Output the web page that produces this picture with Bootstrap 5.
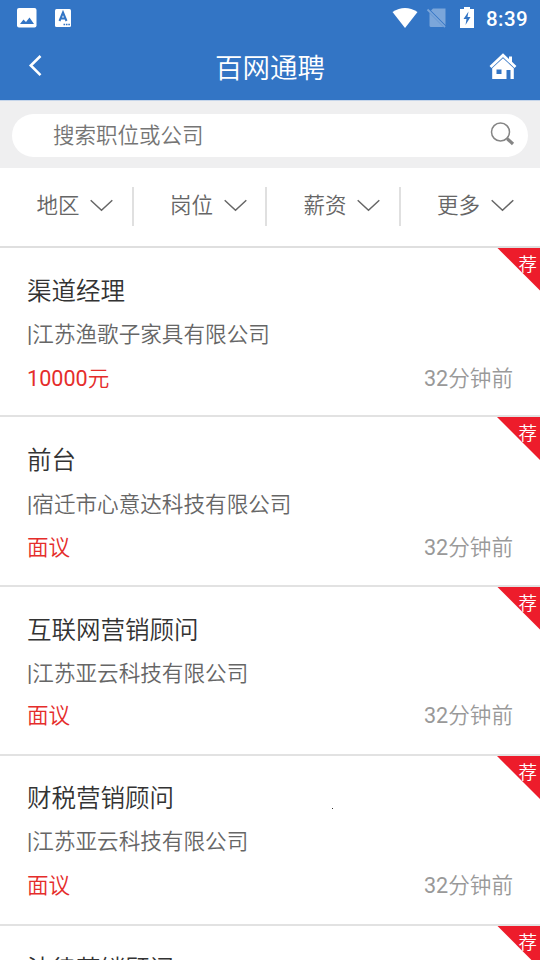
<!DOCTYPE html>
<html lang="zh-CN">
<head>
<meta charset="utf-8">
<meta name="viewport" content="width=device-width, initial-scale=1">
<title>百网通聘</title>
<link href="https://cdn.jsdelivr.net/npm/bootstrap@5.3.0/dist/css/bootstrap.min.css" rel="stylesheet">
<style>
body{font-family:Roboto,"Noto Sans CJK SC",sans-serif;font-weight:350;height:960px;background:#fff;color:#333}
.topbar{background:#3375c5;height:100px}
.status{height:36px;padding:0 12px 0 17px}
.clock{font-size:20.5px;font-weight:500;line-height:36px;letter-spacing:.4px;padding-top:2px}
.titlebar{height:64px;padding:0 23px 0 28px}
.titlebar h1{font-size:27.5px;font-weight:350;line-height:60px;padding:1px 0 0 7px}
.search-area{height:68px;background:#efeff0;border-top:1px solid #c5d5ea;padding:13px 12px 0}
.search-pill{height:43px;background:#fff;padding:0 12px 0 41px;font-size:21.5px;color:#757575}
.search-pill span{padding-top:2px}
.filters{height:79.6px;border-bottom:2px solid #dfdfdf;font-size:21.5px;color:#666}
.filter{height:39px;margin-top:19px;width:133.5px;padding:0 18.5px 0 36.5px;border-right:2px solid #e0e0e0}
.filter svg{margin-bottom:2px}
.filter:last-child{border-right-color:transparent}
.job{height:169.5px;padding:27px 27px 0;border-bottom:2px solid #e2e2e2}
.job h2{font-size:24.5px;line-height:34px;margin:0;font-weight:350;color:#333}
.company{font-size:21.6px;line-height:32px;color:#666;margin-top:10.6px}
.meta{font-size:21.6px;line-height:32px;margin-top:11.4px}
.num{font-weight:400}
.job:nth-child(3) .meta{margin-top:10px}
.job:nth-child(4) h2{margin-top:-.8px}
.job:nth-child(4) .company{margin-top:10px}
.pay{color:#e52d2b}
.ago{color:#999}
.ribbon{width:43px;height:43px;background:#ed1c2b;clip-path:polygon(0 0,100% 0,100% 100%);color:#fff;font-size:18.5px;line-height:34px;padding-right:3px}
.speck{left:332px;top:808px;width:1px;height:1px;background:#333}
</style>
</head>
<body class="overflow-hidden position-relative">
<header class="topbar text-white">
  <div class="status d-flex align-items-center">
    <svg width="20" height="20" viewBox="0 0 20 20"><rect width="19.5" height="19.5" rx="2" fill="#fff"/><path d="M3 16l3.5-4.5 2.5 2.5 3.5-4.500 4.500 6.500z" fill="#3375c5"/></svg>
    <svg class="ms-3" width="20" height="20" viewBox="-2 0 20 20"><rect y="1" width="16" height="18" rx="1.500" fill="#fff"/><path d="M4.500 13L8 4.500 11.500 13M5.700 10.500h4.600" fill="none" stroke="#3375c5" stroke-width="2"/><path d="M8.500 16.500h6.500" stroke="#3375c5" stroke-width="1.500" stroke-dasharray="1.600 .8"/></svg>
    <svg class="ms-auto" width="26" height="21" viewBox="0 0 26 21"><path d="M0.500 4Q13-4 25.500 4L13 20z" fill="#fff"/></svg>
    <svg class="ms-2" width="22" height="21" viewBox="0 0 22 21"><path d="M7 .500h12.500v16.500L5 2.500zM3.500 5l14 14H5Q3.500 19 3.500 17.500z" fill="#7ba6da"/><path d="M1.500 1.500l17.500 17.500" stroke="#7ba6da" stroke-width="1.800"/></svg>
    <svg class="ms-2 me-1" width="18" height="22" viewBox="-4 0 18 22"><path d="M4 0h6v2h4V21H0V2h4z" fill="#fff"/><path d="M8.500 4.500L3.500 12H6.500L5.500 18 10.500 10H7.500z" fill="#3375c5"/></svg>
    <span class="clock ms-2">8:39</span>
  </div>
  <div class="titlebar d-flex align-items-center justify-content-between">
    <svg width="16" height="22" viewBox="0 0 16 22" class="mb-1"><path d="M12.500 1L2.800 10.500l9.700 9.700" fill="none" stroke="#fff" stroke-width="2.600"/></svg>
    <h1 class="m-0">百网通聘</h1>
    <svg class="mb-1" width="28" height="28" viewBox="0 0 28 28"><path d="M1.500 15L14 3.200 26.500 15" fill="none" stroke="#fff" stroke-width="2.800"/><path d="M20 4.500h3v7l-3-3z" fill="#fff"/><path fill-rule="evenodd" d="M14 6.200L24.800 16.300V27H21.500V18H17.500V27H3.200V16.300zM7.500 17.500h5v4.500h-5z" fill="#fff"/></svg>
  </div>
</header>
<div class="search-area">
  <div class="search-pill rounded-pill d-flex align-items-center justify-content-between">
    <span>搜索职位或公司</span>
    <svg width="26" height="26" viewBox="0 0 26 26" class="mb-1" fill="none" stroke="#858585"><circle cx="10.500" cy="11" r="9" stroke-width="1.500"/><path d="M16.500 17l1.500 1.500" stroke-width="2"/><path d="M17.500 18l5.500 5" stroke-width="3.200"/></svg>
  </div>
</div>
<nav class="filters d-flex">
  <div class="filter d-flex align-items-center justify-content-between"><span>地区</span><svg width="23" height="13" viewBox="0 0 23 13"><path d="M.7 1.200l10.800 10 10.800-10" fill="none" stroke="#666" stroke-width="1.500"/></svg></div>
  <div class="filter d-flex align-items-center justify-content-between"><span>岗位</span><svg width="23" height="13" viewBox="0 0 23 13"><path d="M.7 1.200l10.800 10 10.800-10" fill="none" stroke="#666" stroke-width="1.500"/></svg></div>
  <div class="filter d-flex align-items-center justify-content-between"><span>薪资</span><svg width="23" height="13" viewBox="0 0 23 13"><path d="M.7 1.200l10.800 10 10.800-10" fill="none" stroke="#666" stroke-width="1.500"/></svg></div>
  <div class="filter d-flex align-items-center justify-content-between"><span>更多</span><svg width="23" height="13" viewBox="0 0 23 13"><path d="M.7 1.200l10.800 10 10.800-10" fill="none" stroke="#666" stroke-width="1.500"/></svg></div>
</nav>
<main>
  <article class="job position-relative"><span class="ribbon position-absolute top-0 end-0 text-end">荐</span><h2>渠道经理</h2><div class="company"><span class="num">|</span>江苏渔歌子家具有限公司</div><div class="meta d-flex justify-content-between"><span class="pay"><span class="num">10000</span>元</span><span class="ago"><span class="num">32</span>分钟前</span></div></article>
  <article class="job position-relative"><span class="ribbon position-absolute top-0 end-0 text-end">荐</span><h2>前台</h2><div class="company"><span class="num">|</span>宿迁市心意达科技有限公司</div><div class="meta d-flex justify-content-between"><span class="pay">面议</span><span class="ago"><span class="num">32</span>分钟前</span></div></article>
  <article class="job position-relative"><span class="ribbon position-absolute top-0 end-0 text-end">荐</span><h2>互联网营销顾问</h2><div class="company"><span class="num">|</span>江苏亚云科技有限公司</div><div class="meta d-flex justify-content-between"><span class="pay">面议</span><span class="ago"><span class="num">32</span>分钟前</span></div></article>
  <article class="job position-relative"><span class="ribbon position-absolute top-0 end-0 text-end">荐</span><h2>财税营销顾问</h2><div class="company"><span class="num">|</span>江苏亚云科技有限公司</div><div class="meta d-flex justify-content-between"><span class="pay">面议</span><span class="ago"><span class="num">32</span>分钟前</span></div></article>
  <article class="job position-relative"><span class="ribbon position-absolute top-0 end-0 text-end">荐</span><h2>法律营销顾问</h2></article>
</main>
<span class="speck position-absolute"></span>
<script src="https://cdn.jsdelivr.net/npm/bootstrap@5.3.0/dist/js/bootstrap.bundle.min.js"></script>
</body>
</html>
